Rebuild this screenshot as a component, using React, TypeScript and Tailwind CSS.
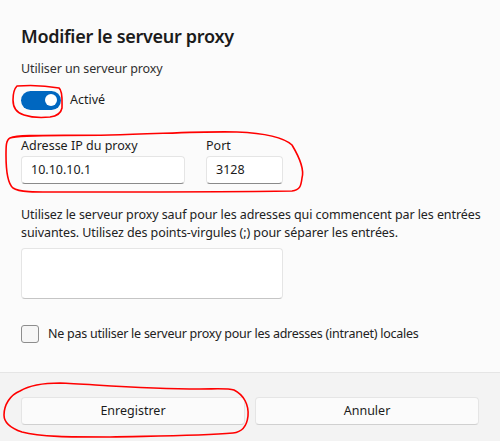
import React from "react";

const font = { fontFamily: '"Noto Sans", "Open Sans", sans-serif' };

export default function App() {
  return (
    <div
      className="relative w-[500px] h-[441px] bg-[#fbfbfb] flex flex-col overflow-hidden text-[#1b1b1b]"
      style={font}
    >
      <div className="flex-1 flex flex-col px-[21px]">
        <div className="mt-[22px] text-[18px] leading-[28px] font-semibold tracking-[-0.3px]">
          Modifier le serveur proxy
        </div>
        <div className="mt-[10px] text-[12.5px] leading-[18px] text-[#303030] tracking-[-0.1px]">
          Utiliser un serveur proxy
        </div>
        <div className="mt-[12px] flex items-center h-[20px]">
          <div className="w-[40px] h-[19px] rounded-full bg-[#0067c0] flex items-center justify-end pr-[4px]">
            <div className="w-[12px] h-[12px] rounded-full bg-white" />
          </div>
          <span className="ml-[9px] text-[12.5px] leading-[18px]">Activé</span>
        </div>
        <div className="mt-[27px] flex gap-[21px]">
          <div className="flex flex-col">
            <span className="text-[12.5px] leading-[18px]">Adresse IP du proxy</span>
            <div className="mt-[1px] w-[164px] h-[28px] bg-white border border-[#e5e5e5] border-b-[#8a8a8a] rounded-[4px] flex items-center pl-[9px] text-[12.5px]">
              10.10.10.1
            </div>
          </div>
          <div className="flex flex-col">
            <span className="text-[12.5px] leading-[18px]">Port</span>
            <div className="mt-[1px] w-[77px] h-[28px] bg-white border border-[#e5e5e5] border-b-[#8a8a8a] rounded-[4px] flex items-center pl-[9px] text-[12.5px]">
              3128
            </div>
          </div>
        </div>
        <div className="mt-[22px] text-[12.5px] leading-[18px] tracking-[-0.08px] text-[#222] whitespace-nowrap">
          Utilisez le serveur proxy sauf pour les adresses qui commencent par les entrées
          <br />
          suivantes. Utilisez des points-virgules (;) pour séparer les entrées.
        </div>
        <div className="mt-[6px] w-[262px] h-[51px] bg-white border border-[#e5e5e5] border-b-[#c5c5c5] rounded-[4px]" />
        <div className="mt-[26px] flex items-center">
          <div className="w-[18px] h-[18px] rounded-[3px] border border-[#8d8d8d] bg-[#f6f6f6]" />
          <span className="ml-[9px] text-[12.5px] leading-[18px] tracking-[-0.25px] text-[#222]">
            Ne pas utiliser le serveur proxy pour les adresses (intranet) locales
          </span>
        </div>
      </div>
      <div className="h-[69px] bg-[#f3f3f3] border-t border-[#e5e5e5] px-[21px] pt-[24px] flex gap-[10px]">
        <button className="w-[224px] h-[28px] bg-[#fbfbfb] border border-[#e5e5e5] border-b-[#d0d0d0] rounded-[4px] text-[12.5px] text-[#1b1b1b]">
          Enregistrer
        </button>
        <button className="w-[224px] h-[28px] bg-[#fbfbfb] border border-[#e5e5e5] border-b-[#d0d0d0] rounded-[4px] text-[12.5px] text-[#1b1b1b]">
          Annuler
        </button>
      </div>
      <svg
        className="absolute left-0 top-0 pointer-events-none"
        width="500"
        height="441"
        viewBox="0 0 500 441"
        fill="none"
        stroke="#ff0000"
        strokeWidth="1.6"
        strokeLinecap="round"
        strokeLinejoin="round"
      >
        <path d="M17 86 C30 85 48 86 59 88 C63 91 62 101 62 108 C61 113 58 116 50 117 C40 118 30 117 24 115 C17 113 13 108 13 100 C13 94 14 89 17 86 Z" />
        <path d="M10 138 C20 134 60 136 110 135 C160 134 200 131 237 132 C262 133 282 136 292 145 C298 155 305 168 302 178 C301 186 300 190 292 191 C230 192 130 192 70 192 C40 192 20 193 13 188 C7 183 6 168 6 155 C6 146 6 140 10 138 Z" />
        <path d="M20 391 C30 385 45 383 60 383 C90 384 140 389 200 389 C215 389 228 388 234 390 C244 395 249 405 248 416 C247 425 243 432 233 433 C200 436 150 436 110 437 C70 437 40 437 22 432 C10 428 4 422 4 415 C4 405 10 395 20 391 Z" />
      </svg>
    </div>
  );
}
